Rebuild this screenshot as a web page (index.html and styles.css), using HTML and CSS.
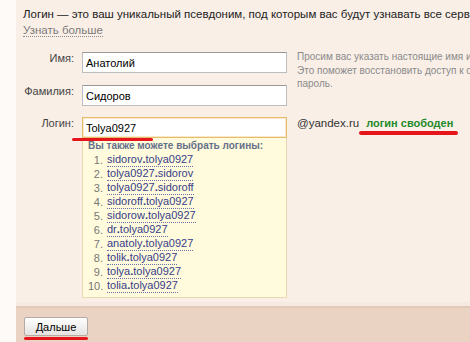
FILE: index.html
```html
<!DOCTYPE html>
<html>
<head>
<meta charset="UTF-8">
<link rel="stylesheet" href="styles.css">
<title>Регистрация</title>
</head>
<body>
  <div class="page">
    <div class="main">
      <p class="intro">
        Логин — это ваш уникальный псевдоним, под которым вас будут узнавать все сервисы Яндекса.<br>
        <a href="#" class="more">Узнать больше</a>
      </p>

      <div class="names">
        <div class="names-fields">
          <div class="row">
            <label class="label" for="fname">Имя:</label>
            <input class="field" id="fname" type="text" value="Анатолий">
          </div>
          <div class="row row-last">
            <label class="label" for="lname">Фамилия:</label>
            <input class="field" id="lname" type="text" value="Сидоров">
          </div>
        </div>
        <p class="hint">
          Просим вас указать настоящие имя и фамилию.<br>
          Это поможет восстановить доступ к своему почтовому ящику, если вы забудете<br>
          пароль.
        </p>
      </div>

      <div class="row row-login">
        <label class="label" for="login">Логин:</label>
        <span class="mark mark-field">
          <input class="field field-active" id="login" type="text" value="Tolya0927">
        </span>
        <span class="domain">@yandex.ru</span>
        <span class="status mark mark-status">логин свободен</span>
      </div>

      <div class="suggest">
        <div class="suggest-title">Вы также можете выбрать логины:</div>
        <ol class="suggest-list">
          <li><a href="#">sidorov<b>.</b>tolya0927</a></li>
          <li><a href="#">tolya0927<b>.</b>sidorov</a></li>
          <li><a href="#">tolya0927<b>.</b>sidoroff</a></li>
          <li><a href="#">sidoroff<b>.</b>tolya0927</a></li>
          <li><a href="#">sidorow<b>.</b>tolya0927</a></li>
          <li><a href="#">dr<b>.</b>tolya0927</a></li>
          <li><a href="#">anatoly<b>.</b>tolya0927</a></li>
          <li><a href="#">tolik<b>.</b>tolya0927</a></li>
          <li><a href="#">tolya<b>.</b>tolya0927</a></li>
          <li><a href="#">tolia<b>.</b>tolya0927</a></li>
        </ol>
      </div>
    </div>

    <div class="footer">
      <span class="mark mark-button">
        <button class="next" type="button">Дальше</button>
      </span>
    </div>
  </div>
</body>
</html>
```

FILE: styles.css
```css
html, body {
  overflow: hidden;
}
body {
  margin: 0;
  background-color: #fdfaf7;
  font-family: "Liberation Sans", Arial, sans-serif;
  font-size: 11px;
  color: #333;
}
.page {
  margin-left: 16px;
  height: 342px;
  display: flex;
  flex-direction: column;
}
.main {
  height: 306px;
  box-sizing: border-box;
  padding: 6px 0 0 7px;
  background-color: #f9efe7;
  border-bottom: 4px solid #f6e9e2;
}
.intro {
  margin: 0;
  font-size: 11.5px;
  line-height: 16px;
  white-space: nowrap;
  color: #222;
}
.more {
  color: #7a7a7a;
  text-decoration: none;
  border-bottom: 1px dotted #8a8a8a;
}

.names {
  display: flex;
  margin-top: 14px;
}
.row {
  display: flex;
  align-items: flex-start;
  height: 21px;
  margin-bottom: 12px;
}
.row-last {
  margin-bottom: 0;
}
.label {
  width: 51px;
  padding-right: 8px;
  line-height: 13px;
  text-align: right;
  color: #444;
}
.field {
  box-sizing: border-box;
  width: 205px;
  height: 21px;
  margin: 0;
  padding: 0 3px;
  border: 1px solid #bdbdbd;
  border-top-color: #989898;
  background: #fff;
  font-family: "Liberation Sans", Arial, sans-serif;
  font-size: 11px;
  color: #000;
}
.field-active {
  border-color: #e6bd70;
  box-shadow: inset 0 0 0 1px #f9e9c6;
}
.hint {
  margin: -2px 0 0;
  padding-left: 10px;
  font-size: 10px;
  line-height: 13.5px;
  color: #8a8a8a;
  white-space: nowrap;
}

.row-login {
  margin-top: 11px;
  margin-bottom: 0;
}
.domain {
  margin-left: 10px;
  font-size: 11.5px;
  line-height: 13px;
  color: #333;
}
.status {
  margin-left: 7px;
  line-height: 13px;
  font-weight: bold;
  color: #1f8a2b;
}
.mark {
  position: relative;
}
.mark::after {
  content: "";
  position: absolute;
  height: 3px;
  border-radius: 2px;
  background-color: #e4161b;
}
.mark-field::after {
  left: -10px;
  top: 21px;
  width: 81px;
}
.mark-status::after {
  left: -7px;
  top: 14px;
  width: 99px;
  height: 4px;
}
.mark-button {
  display: inline-block;
  height: 19px;
}
.mark-button::after {
  left: 0;
  top: 20px;
  width: 64px;
}

.suggest {
  box-sizing: border-box;
  width: 205px;
  height: 160px;
  margin-left: 59px;
  padding: 1px 4px 0 5px;
  background-color: #fffbdc;
  border: 1px solid #ecd8b0;
  border-top: none;
}
.suggest-title {
  font-size: 10px;
  line-height: 14px;
  font-weight: bold;
  color: #66708a;
}
.suggest-list {
  margin: 0;
  padding: 0;
  list-style: none;
  counter-reset: item;
}
.suggest-list li {
  display: flex;
  line-height: 14px;
  counter-increment: item;
}
.suggest-list li::before {
  content: counter(item) ".";
  width: 15px;
  margin-right: 4px;
  text-align: right;
  color: #777;
}
.suggest-list a {
  color: #373d8a;
  text-decoration: none;
  border-bottom: 1px dotted #6a6fa8;
  line-height: 13px;
}

.footer {
  flex: 1;
  padding: 9px 0 0 8px;
  background-color: #ebd3c3;
  border-top: 2px solid #e2cabb;
}
.next {
  display: block;
  width: 64px;
  height: 19px;
  padding: 0;
  border: 1px solid #b4aba4;
  border-radius: 2px;
  background: linear-gradient(#ffffff, #e6e3e1);
  font-family: "Liberation Sans", Arial, sans-serif;
  font-size: 11px;
  color: #000;
}
```
